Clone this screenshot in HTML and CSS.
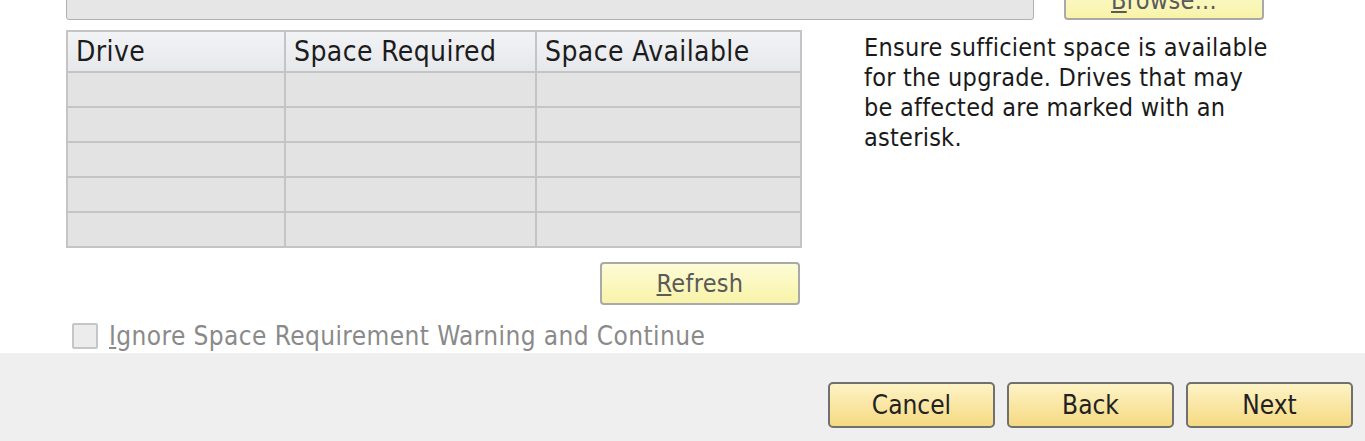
FILE: index.html
```html
<!DOCTYPE html>
<html>
<head>
<meta charset="utf-8">
<link rel="stylesheet" href="styles.css">
</head>
<body>
<div class="page">
  <div class="path-row">
    <div class="path-input"></div>
    <button class="btn btn-light browse"><u>B</u>rowse...</button>
  </div>
  <div class="main">
    <div class="left">
      <table class="drives">
        <thead>
          <tr><th class="c1">Drive</th><th class="c2">Space Required</th><th class="c3">Space Available</th></tr>
        </thead>
        <tbody>
          <tr><td></td><td></td><td></td></tr>
          <tr><td></td><td></td><td></td></tr>
          <tr><td></td><td></td><td></td></tr>
          <tr><td></td><td></td><td></td></tr>
          <tr><td></td><td></td><td></td></tr>
        </tbody>
      </table>
      <div class="refresh-row">
        <button class="btn btn-light refresh"><u>R</u>efresh</button>
      </div>
      <label class="check-row">
        <span class="checkbox"></span>
        <span class="check-label"><u>I</u>gnore Space Requirement Warning and Continue</span>
      </label>
    </div>
    <p class="note">Ensure sufficient space is available for the upgrade. Drives that may be affected are marked with an asterisk.</p>
  </div>
  <div class="footer">
    <button class="btn btn-main">Cancel</button>
    <button class="btn btn-main">Back</button>
    <button class="btn btn-main">Next</button>
  </div>
</div>
</body>
</html>
```

FILE: styles.css
```css
html, body {
  margin: 0;
  padding: 0;
  background: #ffffff;
}
body {
  font-family: "DejaVu Sans Condensed", "DejaVu Sans", sans-serif;
  color: #222;
  width: 1365px;
  height: 441px;
  overflow: hidden;
}
.page {
  display: flex;
  flex-direction: column;
}
.path-row {
  display: flex;
  align-items: flex-end;
  margin-top: -22px;
  padding-left: 66px;
  height: 42px;
}
.path-input {
  width: 966px;
  height: 40px;
  background: #e6e6e6;
  border: 1px solid #b0b0b0;
  border-radius: 3px;
}
.btn {
  font-family: inherit;
  cursor: default;
  padding: 0;
}
.btn-light {
  background: linear-gradient(#fdfcd6, #f8f3a8);
  border: 2px solid #a9a9a9;
  border-radius: 4px;
  color: #5a5a5a;
  font-size: 25px;
  letter-spacing: 0.3px;
}
.browse {
  margin-left: 30px;
  width: 200px;
  height: 40px;
}
.main {
  display: flex;
  padding-left: 66px;
  margin-top: 10px;
}
.left {
  width: 736px;
  display: flex;
  flex-direction: column;
}
.drives {
  border-collapse: collapse;
  width: 736px;
  border: 2px solid #c2c2c2;
}
.drives th, .drives td {
  border: 2px solid #c4c4c4;
  padding: 0;
}
.drives th {
  height: 39px;
  background: linear-gradient(#f2f3f5, #e6e8ec);
  font-weight: normal;
  text-align: left;
  font-size: 28px;
  letter-spacing: 0.4px;
  color: #1c1c1c;
  padding-left: 8px;
  line-height: 39px;
}
.drives td {
  height: 33px;
  background: #e3e3e3;
}
.c1 { width: 208px; }
.c2 { width: 241px; }
.c3 { width: 255px; }
.refresh-row {
  display: flex;
  justify-content: flex-end;
  margin-top: 14px;
  padding-right: 2px;
}
.refresh {
  width: 200px;
  height: 43px;
}
.check-row {
  display: flex;
  align-items: center;
  margin-top: 16px;
  padding-left: 6px;
  gap: 11px;
}
.checkbox {
  width: 22px;
  height: 22px;
  border: 2px solid #c6c6c6;
  background: #ececec;
  border-radius: 2px;
}
.check-label {
  color: #8a8a8a;
  font-size: 26px;
  letter-spacing: 0.4px;
}
.note {
  margin: 3px 0 0 62px;
  width: 408px;
  font-size: 25px;
  letter-spacing: 0.25px;
  line-height: 30px;
  color: #1a1a1a;
}
.footer {
  margin-top: 2px;
  height: 90px;
  background: #efefef;
  display: flex;
  justify-content: flex-end;
  align-items: flex-start;
  padding: 29px 12px 0 0;
  gap: 12px;
  box-sizing: border-box;
}
.btn-main {
  width: 167px;
  height: 46px;
  background: linear-gradient(#fdf3c6, #f6da82);
  border: 2px solid #707070;
  border-radius: 5px;
  color: #222;
  font-size: 26px;
}
```
